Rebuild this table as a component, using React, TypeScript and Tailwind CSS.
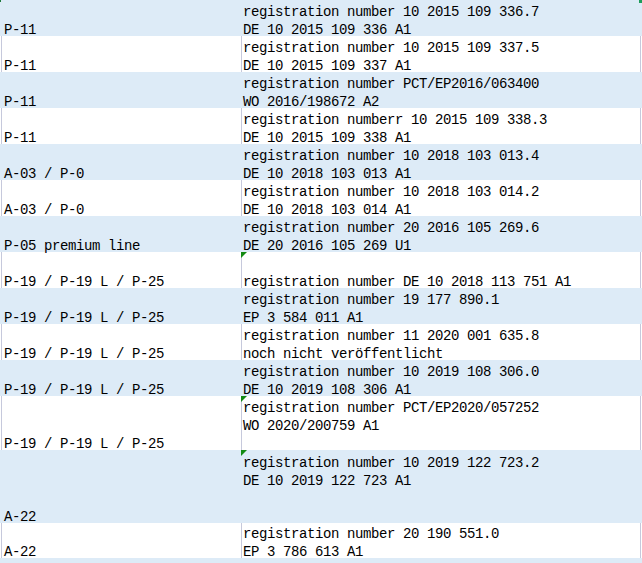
import React from "react";

type Row = {
  name: string;
  lines: string[];
  h: number;
  blue: boolean;
  flag?: boolean;
};

const P19 = "P-19 / P-19 L / P-25";

const rows: Row[] = [
  { name: "P-11", lines: ["registration number 10 2015 109 336.7", "DE 10 2015 109 336 A1"], h: 36, blue: true },
  { name: "P-11", lines: ["registration number 10 2015 109 337.5", "DE 10 2015 109 337 A1"], h: 36, blue: false },
  { name: "P-11", lines: ["registration number PCT/EP2016/063400", "WO 2016/198672 A2"], h: 36, blue: true },
  { name: "P-11", lines: ["registration numberr 10 2015 109 338.3", "DE 10 2015 109 338 A1"], h: 36, blue: false },
  { name: "A-03 / P-0", lines: ["registration number 10 2018 103 013.4", "DE 10 2018 103 013 A1"], h: 36, blue: true },
  { name: "A-03 / P-0", lines: ["registration number 10 2018 103 014.2", "DE 10 2018 103 014 A1"], h: 36, blue: false },
  { name: "P-05 premium line", lines: ["registration number 20 2016 105 269.6", "DE 20 2016 105 269 U1"], h: 36, blue: true },
  { name: P19, lines: ["", "registration number DE 10 2018 113 751 A1"], h: 36, blue: false, flag: true },
  { name: P19, lines: ["registration number 19 177 890.1", "EP 3 584 011 A1"], h: 36, blue: true },
  { name: P19, lines: ["registration number 11 2020 001 635.8", "noch nicht veröffentlicht"], h: 36, blue: false },
  { name: P19, lines: ["registration number 10 2019 108 306.0", "DE 10 2019 108 306 A1"], h: 36, blue: true },
  { name: P19, lines: ["registration number PCT/EP2020/057252", "WO 2020/200759 A1", ""], h: 54, blue: false, flag: true },
  { name: "A-22", lines: ["registration number 10 2019 122 723.2", "DE 10 2019 122 723 A1", "", ""], h: 73, blue: true, flag: true },
  { name: "A-22", lines: ["registration number 20 190 551.0", "EP 3 786 613 A1"], h: 35, blue: false },
  { name: "", lines: ["", ""], h: 36, blue: true },
];

function Line({ text }: { text: string }) {
  // 18px slot with the baseline pushed toward the bottom of the slot
  return <div className="h-[18px] pt-[6px] leading-[12px] whitespace-pre">{text}</div>;
}

export default function App() {
  return (
    <div
      className="relative h-[563px] w-[642px] overflow-hidden bg-white text-[14px] tracking-[-0.4px] text-black"
      style={{ fontFamily: '"Liberation Mono", "DejaVu Sans Mono", monospace' }}
    >
      {/* selection remnants from the cell above */}
      <div className="absolute left-0 top-0 z-10 h-[2px] w-px bg-[#1e7b3c]" />
      <div className="absolute left-[639px] top-0 z-10 h-[3px] w-[3px] bg-[#1e9c5a]" />

      {rows.map((r, i) => (
        <div
          key={i}
          className={`flex pl-px ${r.blue ? "bg-[#ddebf7]" : "bg-white"}`}
          style={{ height: r.h }}
        >
          <div
            className={`flex w-[240px] flex-col justify-end border-l pl-[2px] ${
              r.blue ? "border-transparent" : "border-[#c6c9dc]"
            }`}
          >
            <Line text={r.name} />
          </div>
          <div
            className={`relative flex w-[400px] flex-col justify-end border-x pl-[1px] ${
              r.blue ? "border-transparent" : "border-[#c6c9dc]"
            }`}
          >
            {r.flag && (
              <div className="absolute -left-px top-0 h-0 w-0 border-r-[6px] border-t-[6px] border-r-transparent border-t-[#128a12]" />
            )}
            {r.lines.map((l, j) => (
              <Line key={j} text={l} />
            ))}
          </div>
        </div>
      ))}
    </div>
  );
}
